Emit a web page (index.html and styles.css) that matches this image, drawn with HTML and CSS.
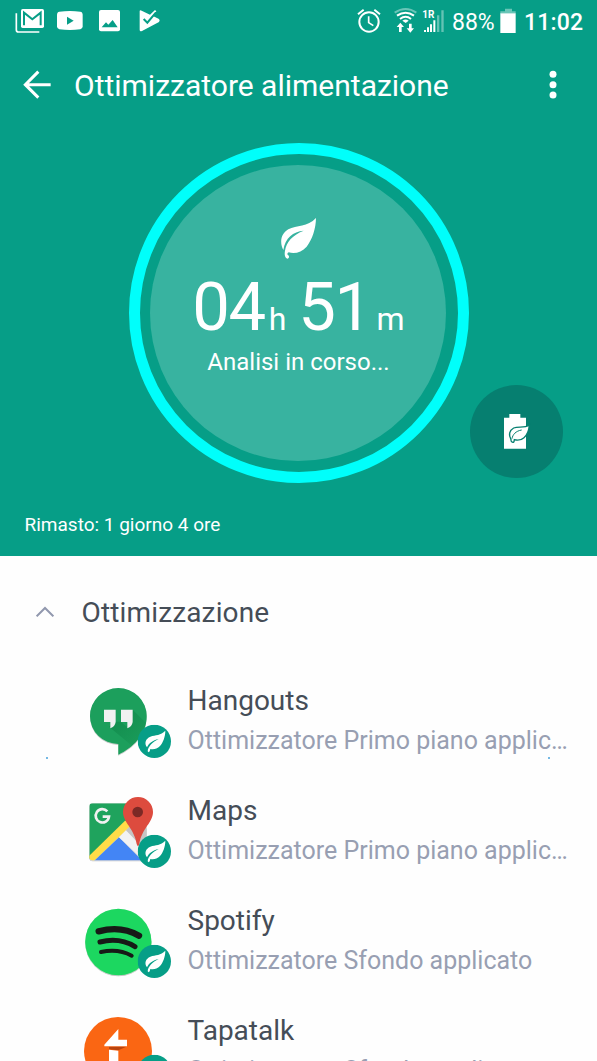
FILE: index.html
```html
<!DOCTYPE html>
<html lang="it">
<head>
<meta charset="utf-8">
<title>Ottimizzatore alimentazione</title>
<link rel="stylesheet" href="styles.css">
</head>
<body>
<svg class="defs" width="0" height="0" aria-hidden="true">
  <defs>
    <symbol id="leaf" viewBox="300 52 112 128">
      <path d="M310 151C299 130 301 103 325 89C350 76 383 82 408 55C408 85 397 120 380 141C365 158 345 163 326 158C321 161 321 165 325 167C329 170 327 177 322 177C314 174 313 164 315 153C319 128 336 107 371 93C339 96 316 114 310 151Z"/>
    </symbol>
    <symbol id="badge" viewBox="0 0 100 100">
      <circle cx="50" cy="50" r="50" fill="#069e87"/>
      <path d="M28 68C19 55 24 42 38 36C54 30 69 33 83 18C83 36 76 54 67 64C58 73 48 75 38 73L36 80Q33 85 30 80C31 66 44 52 63 43C45 47 33 56 28 68Z" fill="#fff"/>
    </symbol>
  </defs>
</svg>
<main class="screen">
  <header class="hero">
    <div class="status">
      <svg width="40" height="42" viewBox="42 0 120 126">
        <path d="M49 40V90Q49 96 55 96H118" fill="none" stroke="#fff" stroke-width="5"/>
        <rect x="63" y="27" width="69" height="57" rx="5" fill="#fff"/>
        <path d="M72 76V38L97 58L122 38V76" fill="none" stroke="#069e87" stroke-width="6"/>
      </svg>
      <svg width="42" height="42" viewBox="162 0 126 126">
        <path d="M178 35Q210 31 241 35Q248 36 248 45V79Q248 87 241 88Q210 92 178 88Q171 87 171 79V45Q171 36 178 35Z" fill="#fff"/>
        <path d="M201 50L221 62L201 74Z" fill="#069e87"/>
      </svg>
      <svg width="40" height="42" viewBox="288 0 120 126">
        <rect x="297" y="30" width="63" height="64" rx="6" fill="#fff"/>
        <path d="M305 82L318 67L325 74L338 60L353 82Z" fill="#069e87"/>
      </svg>
      <svg width="40" height="42" viewBox="409 0 120 126">
        <path d="M420 34Q420 29 426 32L451 44L466 30L470 34L460 48L478 57Q482 61 478 66L427 93Q420 96 420 89Z" fill="#fff"/>
        <path d="M432 57L443 68L469 37" fill="none" stroke="#069e87" stroke-width="6"/>
      </svg>
      <svg class="status-right" width="35" height="42" viewBox="45 0 105 126" fill="none" stroke="#fff" stroke-width="6">
        <circle cx="87" cy="66" r="29"/>
        <path d="M54 43L71 29M103 29L120 43" />
        <path d="M86 49V68L100 77" stroke-width="5"/>
      </svg>
      <svg width="30" height="42" viewBox="150 0 90 126" fill="none" stroke="#fff" stroke-width="6">
        <path d="M164 38Q197 16 229 38" opacity=".4"/>
        <path d="M171 47Q197 29 222 47M180 57Q197 44 213 57"/>
        <path d="M187 62Q197 55 206 62L197 69Z" fill="#fff" stroke="none"/>
        <path d="M181 68L192 81H185V96H177V81H170ZM211 98L200 85H207V71H215V85H222Z" fill="#fff" stroke="none"/>
      </svg>
      <svg class="signal" width="27" height="42" viewBox="240 0 81 126" fill="#fff">
        <text x="247" y="53">1R</text>
        <path d="M252 90H258V96H252ZM261 82H267V96H261ZM270 73H276V96H270ZM280 61H286V96H280Z"/>
        <path d="M291 46H298V96H291ZM304 31H311V96H304Z" opacity=".38"/>
      </svg>
      <span class="percent">88%</span>
      <svg width="16" height="42" viewBox="480 0 48 126" fill="#fff">
        <path d="M495 26H516V34H527V41H481V34H495Z" opacity=".4"/>
        <rect x="481" y="40" width="46" height="59"/>
      </svg>
      <span class="clock">11:02</span>
    </div>
    <div class="appbar">
      <svg width="28" height="30" viewBox="70 0 84 90" fill="none" stroke="#fff" stroke-width="9">
        <path d="M153 44H77M116 5L77 44L116 83"/>
      </svg>
      <h1 class="title">Ottimizzatore alimentazione</h1>
      <svg class="more" width="8" height="30" viewBox="0 0 24 90" fill="#fff">
        <circle cx="12" cy="13" r="10.5"/><circle cx="12" cy="44" r="10.5"/><circle cx="12" cy="75" r="10.5"/>
      </svg>
    </div>
    <section class="dial">
      <div class="disc">
        <svg class="dial-leaf" width="37.3" height="42.7" fill="#fff"><use href="#leaf"/></svg>
        <div class="time"><span class="num">04</span><span class="unit hours">h</span><span class="num">51</span><span class="unit minutes">m</span></div>
        <div class="analysis">Analisi in corso...</div>
      </div>
    </section>
    <button class="fab" aria-label="Risparmio">
      <svg width="28" height="38" viewBox="132 130 84 114">
        <path d="M151 133H184V144H201V237H135V144H151Z" fill="#fff"/>
        <path d="M211 166C210 180 205 195 195 204C186 212 176 213 166 210L165 216C161 220 155 217 156 210C148 196 151 182 164 175C178 169 196 177 211 166Z" fill="#fff" stroke="#067f70" stroke-width="4"/>
        <path d="M159 207C161 195 170 184 188 181" fill="none" stroke="#067f70" stroke-width="3"/>
      </svg>
    </button>
    <p class="remaining">Rimasto: 1 giorno 4 ore</p>
  </header>
  <div class="section-head">
    <svg width="18" height="12" viewBox="107 316 54 36"><path d="M109 347L134 322L159 347" fill="none" stroke="#9198ae" stroke-width="6"/></svg>
    <h2 class="section-title">Ottimizzazione</h2>
  </div>
  <ul class="apps">
    <li class="app specks">
      <svg width="100" height="100" viewBox="30 0 300 300">
        <defs>
          <filter id="shadow" x="-10%" y="-10%" width="120%" height="125%"><feDropShadow dx="0" dy="2" stdDeviation="2" flood-opacity=".35"/></filter>
          <linearGradient id="fold" x1="0" y1="0" x2="1" y2="1"><stop offset="0" stop-color="#0b7f43" stop-opacity=".65"/><stop offset="1" stop-color="#0b7f43" stop-opacity="0"/></linearGradient>
          <clipPath id="bubble"><path d="M145 54A85 84 0 0 1 230 138C230 196 186 234 145 254V222A85 84 0 0 1 145 54Z"/></clipPath>
        </defs>
        <path d="M145 54A85 84 0 0 1 230 138C230 196 186 234 145 254V222A85 84 0 0 1 145 54Z" fill="#1a9f5b" filter="url(#shadow)"/>
        <path d="M188 119L240 171L195 235L117 170L135 155L152 155L170 170Z" fill="url(#fold)" clip-path="url(#bubble)"/>
        <path d="M102 119H137V156Q135 170 121 175V156H102ZM153 119H188V156Q186 170 172 175V156H153Z" fill="#f1f1f1"/>
        <use href="#badge" x="203" y="164" width="100" height="100"/>
      </svg>
      <div class="labels"><h3 class="name">Hangouts</h3><p class="sub">Ottimizzatore Primo piano applic…</p></div>
    </li>
    <li class="app">
      <svg width="100" height="100" viewBox="30 0 300 300">
        <defs><clipPath id="mapclip"><rect x="58" y="70" width="172" height="171" rx="10"/></clipPath></defs>
        <rect x="58" y="70" width="172" height="171" rx="10" fill="#ddd" filter="url(#shadow)"/>
        <g clip-path="url(#mapclip)">
          <path d="M58 70H230V90L58 240Z" fill="#1fa35d"/>
          <path d="M50 235L165 122L194 126L58 257Z" fill="#ffdc48"/>
          <path d="M71 244L147 172L219 244Z" fill="#4385f5"/>
          <path d="M147 172L168 151L242 225V260Z" fill="#f2f2f2"/>
          <path d="M168 151L190 128L240 150V225Z" fill="#c5c5c5"/>
        </g>
        <path d="M112 94A20 20 0 1 0 117 110H98" fill="none" stroke="#f1f1f1" stroke-width="8"/>
        <path d="M204 51A45 45 0 0 1 249 96C249 128 215 145 208 192Q204 205 200 192C193 145 159 128 159 96A45 45 0 0 1 204 51Z" fill="#dd4b3e"/>
        <circle cx="203" cy="96" r="16" fill="#7c2925"/>
        <use href="#badge" x="203" y="164" width="100" height="100"/>
      </svg>
      <div class="labels"><h3 class="name">Maps</h3><p class="sub">Ottimizzatore Primo piano applic…</p></div>
    </li>
    <li class="app">
      <svg width="100" height="100" viewBox="30 0 300 300">
        <circle cx="145" cy="156" r="99.500" fill="#1fd760" filter="url(#shadow)"/>
        <g fill="none" stroke="#171a17" stroke-linecap="round">
          <path d="M86 124Q153 106 207 137" stroke-width="19"/>
          <path d="M90 156Q148 141 195 170" stroke-width="15"/>
          <path d="M93 186Q145 175 185 197" stroke-width="12"/>
        </g>
        <use href="#badge" x="203" y="164" width="100" height="100"/>
      </svg>
      <div class="labels"><h3 class="name">Spotify</h3><p class="sub">Ottimizzatore Sfondo applicato</p></div>
    </li>
    <li class="app">
      <svg width="100" height="100" viewBox="30 0 300 300">
        <circle cx="144" cy="153" r="102" fill="#fa6613"/>
        <path d="M117 140H169L145 151L117 148Z" fill="#b94410"/>
        <path d="M145 87V119H171V139H103V134Z" fill="#fff"/>
        <path d="M117 149L145 152V200H117Z" fill="#fff"/>
        <use href="#badge" x="203" y="164" width="100" height="100"/>
      </svg>
      <div class="labels"><h3 class="name">Tapatalk</h3><p class="sub">Ottimizzatore Sfondo applicato</p></div>
    </li>
  </ul>
</main>
</body>
</html>
```
FILE: styles.css
```css
* { box-sizing: border-box; margin: 0; padding: 0; }
html, body { height: 1061px; overflow: hidden; }
body { font-family: Roboto, sans-serif; background: #fefefe; font-weight: 400; }
svg { display: block; flex: none; }
h1, h2, h3 { font-weight: 400; }
.defs { position: absolute; }
.screen { width: 597px; height: 1061px; overflow: hidden; background: #fefefe; }

.hero { position: relative; height: 556px; background: #069e87; color: #fff; }
.status { display: flex; height: 42px; padding-left: 14px; }
.status-right { margin-left: auto; }
.signal text { font: 700 30px Roboto, sans-serif; }
.percent { width: 53px; padding-left: 5px; font-size: 23px; line-height: 45px; white-space: nowrap; }
.clock { width: 81px; padding-left: 8px; font-size: 23px; font-weight: 500; line-height: 45px; letter-spacing: .2px; white-space: nowrap; }

.appbar { display: flex; align-items: center; height: 86px; padding: 0 40px 0 23px; }
.title { flex: 1; padding: 2px 0 0 23px; font-size: 30px; line-height: 40px; white-space: nowrap; }

.dial { width: 340px; height: 340px; margin: 15px 0 0 128.500px; padding: 10.500px; border: 11.500px solid #00fffb; border-radius: 50%; }
.disc { display: flex; flex-direction: column; align-items: center; height: 296px; width: 296px; padding: 52px 0 0 1px; border-radius: 50%; background: #38b3a0; }
.dial-leaf { margin-left: 1px; }
.time { display: flex; align-items: baseline; height: 80px; margin-top: 8px; line-height: 80px; }
.num { font-size: 67px; letter-spacing: -1.500px; }
.unit { font-size: 32px; }
.hours { padding: 0 12px 0 4px; }
.minutes { padding-left: 6px; }
.analysis { font-size: 24px; line-height: 30px; white-space: nowrap; }
.fab { position: absolute; left: 470px; top: 385px; display: grid; place-items: center; width: 93px; height: 93px; padding: 1px 0 0 1px; border: 0; border-radius: 50%; background: #067f70; }
.remaining { padding: 27px 0 0 24.500px; font-size: 19px; line-height: 30px; white-space: nowrap; }

.section-head { display: flex; align-items: center; height: 114px; padding: 0 0 2px 36px; }
.section-title { padding: 2px 0 0 27.500px; font-size: 28px; letter-spacing: .15px; line-height: 40px; color: #454d57; }
.apps { list-style: none; }
.app { position: relative; display: flex; height: 110px; padding-left: 80px; }
.labels { padding: 10px 0 0 7.500px; white-space: nowrap; }
.name { font-size: 28px; line-height: 41px; color: #454d57; }
.sub { font-size: 25px; line-height: 40px; color: #989fb2; }
.specks::before, .specks::after { content: ""; position: absolute; top: 87px; width: 2px; height: 2px; background: #75b9e4; }
.specks::before { left: 46px; }
.specks::after { left: 548px; }
```
